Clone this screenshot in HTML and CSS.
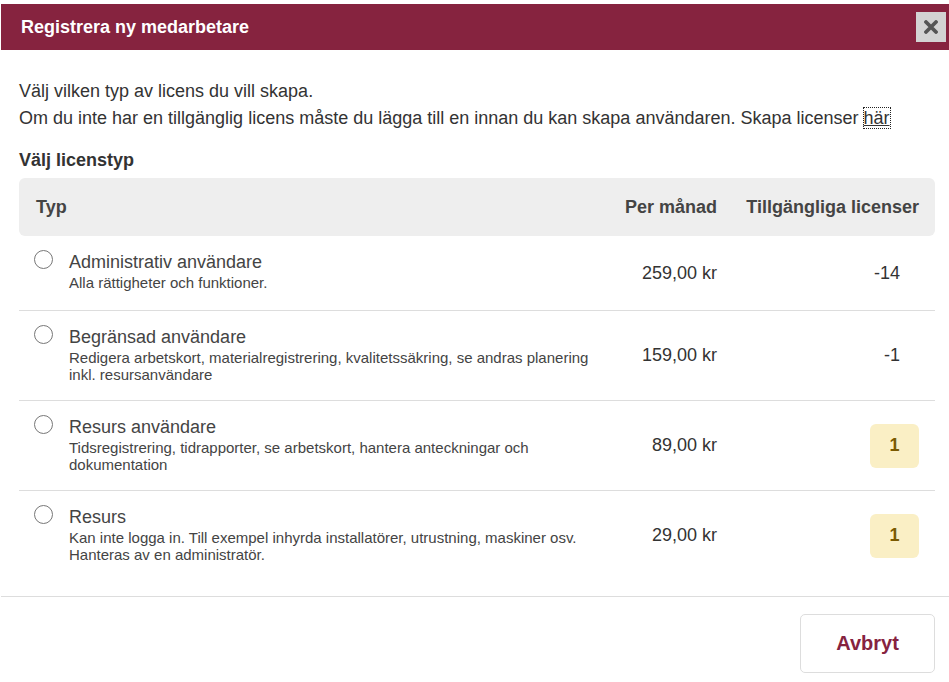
FILE: index.html
```html
<!DOCTYPE html>
<html lang="sv">
<head>
<meta charset="utf-8">
<title>Registrera ny medarbetare</title>
<link rel="stylesheet" href="styles.css">
</head>
<body>
<div class="modal">
  <div class="modal-header">
    <h1 class="modal-title">Registrera ny medarbetare</h1>
    <button class="close-btn" aria-label="Stäng">
      <svg width="14" height="14" viewBox="0 0 14 14"><path d="M2 2L12 12M12 2L2 12" stroke="#555" stroke-width="3.8" stroke-linecap="round"/></svg>
    </button>
  </div>
  <div class="modal-body">
    <p class="intro">Välj vilken typ av licens du vill skapa.</p>
    <p class="intro">Om du inte har en tillgänglig licens måste du lägga till en innan du kan skapa användaren. Skapa licenser <a href="#" class="link">här</a></p>
    <h2 class="section-title">Välj licenstyp</h2>
    <div class="table">
      <div class="thead">
        <div class="th th-type">Typ</div>
        <div class="th th-price">Per månad</div>
        <div class="th th-avail">Tillgängliga licenser</div>
      </div>
      <div class="row row-first">
        <div class="cell-type">
          <span class="radio"></span>
          <div class="type-text">
            <div class="type-name">Administrativ användare</div>
            <div class="type-desc">Alla rättigheter och funktioner.</div>
          </div>
        </div>
        <div class="cell-price">259,00 kr</div>
        <div class="cell-avail"><span class="count">-14</span></div>
      </div>
      <div class="row">
        <div class="cell-type">
          <span class="radio"></span>
          <div class="type-text">
            <div class="type-name">Begränsad användare</div>
            <div class="type-desc">Redigera arbetskort, materialregistrering, kvalitetssäkring, se andras planering inkl. resursanvändare</div>
          </div>
        </div>
        <div class="cell-price">159,00 kr</div>
        <div class="cell-avail"><span class="count">-1</span></div>
      </div>
      <div class="row">
        <div class="cell-type">
          <span class="radio"></span>
          <div class="type-text">
            <div class="type-name">Resurs användare</div>
            <div class="type-desc">Tidsregistrering, tidrapporter, se arbetskort, hantera anteckningar och dokumentation</div>
          </div>
        </div>
        <div class="cell-price">89,00 kr</div>
        <div class="cell-avail"><span class="badge">1</span></div>
      </div>
      <div class="row">
        <div class="cell-type">
          <span class="radio"></span>
          <div class="type-text">
            <div class="type-name">Resurs</div>
            <div class="type-desc">Kan inte logga in. Till exempel inhyrda installatörer, utrustning, maskiner osv. Hanteras av en administratör.</div>
          </div>
        </div>
        <div class="cell-price">29,00 kr</div>
        <div class="cell-avail"><span class="badge">1</span></div>
      </div>
    </div>
  </div>
  <div class="modal-footer">
    <button class="btn-cancel">Avbryt</button>
  </div>
</div>
</body>
</html>
```
FILE: styles.css
```css
* { box-sizing: border-box; }
html, body { margin: 0; padding: 0; background: #fff; }
body {
  font-family: "Liberation Sans", Arial, sans-serif;
  color: #333;
}
.modal {
  padding-top: 4px;
  margin-left: 1px;
}
.modal-header {
  background: #86233f;
  height: 46px;
  display: flex;
  align-items: center;
  justify-content: space-between;
  padding: 0 3px 0 20px;
}
.modal-title {
  margin: 0;
  color: #fff;
  font-size: 18px;
  font-weight: bold;
}
.close-btn {
  width: 30px;
  height: 30px;
  border: 0;
  padding: 0;
  background: #d3d3d3;
  display: flex;
  align-items: center;
  justify-content: center;
}
.modal-body {
  padding: 28px 14px 0 18px;
}
.intro {
  margin: 0;
  font-size: 18px;
  line-height: 27px;
}
.link {
  color: #333;
  text-decoration: underline;
  outline: 1px dotted #222;
}
.section-title {
  margin: 17px 0 7px;
  font-size: 18px;
  font-weight: bold;
  line-height: 22px;
}
.table {
  display: flex;
  flex-direction: column;
}
.thead, .row {
  display: grid;
  grid-template-columns: 586px 112px 217px;
}
.thead {
  background: #eee;
  border-radius: 6px;
  height: 58px;
  align-items: center;
  font-weight: bold;
  font-size: 18px;
  color: #444;
}
.th-type { padding-left: 17px; }
.th-price { text-align: right; }
.th-avail { text-align: right; padding-right: 15px; }
.row + .row { border-top: 1px solid #ddd; }
.row {
  align-items: center;
}
.cell-type {
  display: flex;
  align-items: flex-start;
  gap: 16px;
  padding: 14px 0 17px 15px;
}
.row-first .cell-type { padding-bottom: 19px; }
.radio {
  flex: none;
  width: 19px;
  height: 19px;
  border: 1px solid #777;
  border-radius: 50%;
  background: #fff;
}
.type-name {
  font-size: 18px;
  line-height: 24px;
  color: #444;
}
.type-desc {
  font-size: 15px;
  line-height: 17px;
  color: #444;
}
.cell-price {
  text-align: right;
  font-size: 18px;
  color: #333;
}
.cell-avail {
  display: flex;
  justify-content: flex-end;
  padding-right: 15px;
}
.count {
  font-size: 18px;
  padding-right: 19px;
}
.badge {
  width: 49px;
  height: 44px;
  border-radius: 6px;
  background: #faefc5;
  color: #7a5a00;
  font-weight: bold;
  font-size: 18px;
  display: flex;
  align-items: center;
  justify-content: center;
}
.modal-footer {
  border-top: 1px solid #ddd;
  margin-top: 16px;
  display: flex;
  justify-content: flex-end;
  padding: 17px 14px 0 0;
}
.btn-cancel {
  width: 135px;
  height: 59px;
  background: #fff;
  border: 1px solid #ddd;
  border-radius: 5px;
  font-family: "Liberation Sans", Arial, sans-serif;
  font-weight: bold;
  font-size: 20px;
  color: #86233f;
}
```
